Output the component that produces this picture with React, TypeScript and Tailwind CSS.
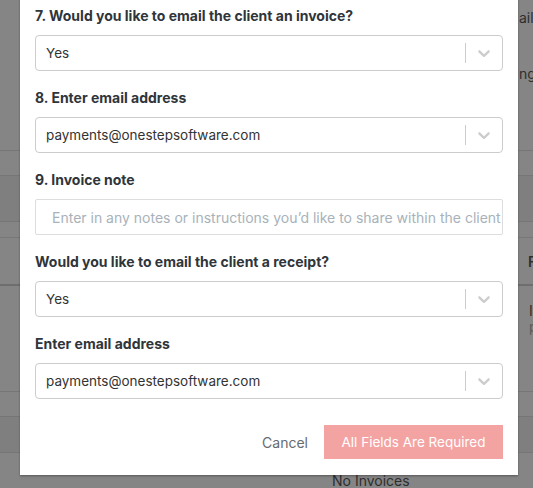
import React from "react";

const font = { fontFamily: "Inter, 'Noto Sans', sans-serif" };

function Chevron() {
  return (
    <svg viewBox="0 0 20 20" className="h-5 w-5 fill-[#cccccc]">
      <path d="M4.516 7.548c0.436-0.446 1.043-0.481 1.576 0l3.908 3.747 3.908-3.747c0.533-0.481 1.141-0.446 1.574 0 0.436 0.445 0.408 1.197 0 1.615-0.406 0.418-4.695 4.502-4.695 4.502-0.217 0.223-0.502 0.335-0.787 0.335s-0.57-0.112-0.789-0.335c0 0-4.287-4.084-4.695-4.502s-0.436-1.17 0-1.615z" />
    </svg>
  );
}

function Select({ value }: { value: string }) {
  return (
    <div className="flex h-[36px] items-center rounded-[4px] border border-[#cccccc] bg-white">
      <div className="flex-1 truncate pl-[10px] text-[13.5px] text-[#333333]">{value}</div>
      <span className="h-5 w-px bg-[#cccccc]" />
      <div className="px-2 flex items-center">
        <Chevron />
      </div>
    </div>
  );
}

function Field({ label, children }: { label: string; children: React.ReactNode }) {
  return (
    <div className="flex flex-col">
      <div className="h-5 text-[14px] leading-5 font-bold text-[#2f353a]">{label}</div>
      <div className="mt-[9px]">{children}</div>
    </div>
  );
}

export default function App() {
  return (
    <div className="relative h-[488px] w-[533px] overflow-hidden bg-[#858585]" style={font}>
      {/* page behind the overlay */}
      <div className="flex flex-col text-[14px] text-[#2e2e2e]">
        <div className="h-[151px] border-b border-[#767676] pl-[519px]">
          <div className="mt-[8px] leading-5">ailable</div>
          <div className="mt-[36px] leading-5">ng</div>
        </div>
        <div className="h-[25px] border-b border-[#767676]" />
        <div className="h-[46px] border-b border-[#767676] bg-[#7f7f7f]" />
        <div className="h-[16px] border-b border-[#777777]" />
        <div className="h-[48px] border-b-2 border-[#6e6e6e] pl-[528px] pt-[14px] font-semibold leading-5">Fee</div>
        <div className="h-[106px] border-b border-[#767676] pl-[529px] pt-[17px]">
          <div className="leading-4">Inv</div>
          <div className="text-[#5a5a5a] leading-4">pay</div>
        </div>
        <div className="h-[25px] border-b border-[#767676]" />
        <div className="h-[36px] border-b border-[#767676] bg-[#7f7f7f]" />
        <div className="pl-[332px] pt-[18px] leading-5">No Invoices</div>
      </div>

      {/* modal */}
      <div className="absolute left-[20px] top-[-40px] flex w-[498px] flex-col bg-white px-[15px] pb-[16px] pt-[46px] shadow-[0_1px_2px_rgba(0,0,0,0.35)]">
        <div className="flex flex-col gap-[17px]">
          <Field label="7. Would you like to email the client an invoice?">
            <Select value="Yes" />
          </Field>
          <Field label="8. Enter email address">
            <Select value="payments@onestepsoftware.com" />
          </Field>
          <Field label="9. Invoice note">
            <div className="flex h-[36px] items-center overflow-hidden rounded-[2px] border border-[#dddddd] bg-white">
              <span className="whitespace-nowrap pl-4 text-[14px] text-[#a8b2ba]">
                Enter in any notes or instructions you’d like to share within the client portal
              </span>
            </div>
          </Field>
          <Field label="Would you like to email the client a receipt?">
            <Select value="Yes" />
          </Field>
          <Field label="Enter email address">
            <Select value="payments@onestepsoftware.com" />
          </Field>
        </div>
        <div className="mt-[26px] flex items-center justify-end gap-4">
          <button className="px-0 text-[14px] text-[#666b70]">Cancel</button>
          <button className="h-[34px] w-[179px] bg-[#f4a3a3] text-[13.5px] text-white">All Fields Are Required</button>
        </div>
      </div>
    </div>
  );
}
